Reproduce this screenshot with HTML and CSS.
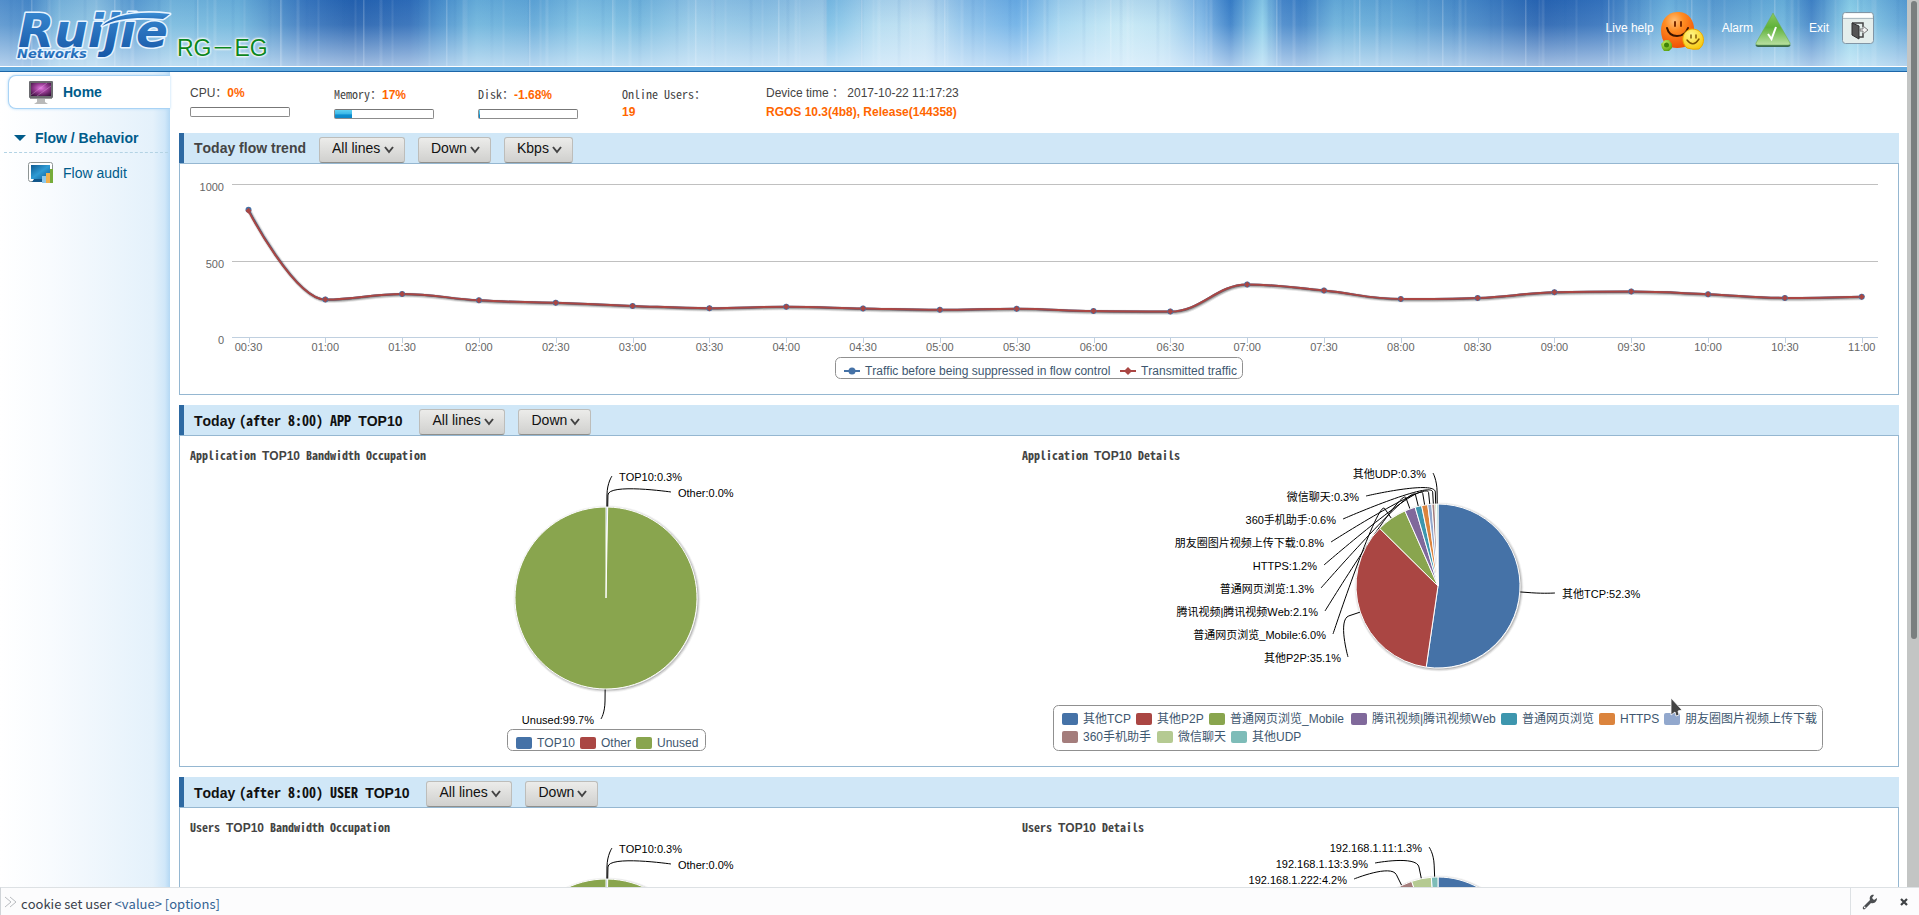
FILE: index.html
```html
<!DOCTYPE html>
<html lang="en">
<head>
<meta charset="utf-8">
<title>RG-EG Home</title>
<link rel="stylesheet" href="styles.css">
</head>
<body>
<div class="viewport">
  <div class="page">
    <header class="banner">
      <div class="brand">
        <svg class="logo" width="160" height="60" viewBox="0 0 160 60" role="img" aria-label="Ruijie Networks">
          <defs>
            <linearGradient id="logoBlue" x1="0" y1="0" x2="0" y2="1"><stop offset="0" stop-color="#3d8fd6"/><stop offset="1" stop-color="#1656a6"/></linearGradient>
          </defs>
          <g class="logo-shape">
            <text class="logo-name" x="4" y="41">Ruijie</text>
            <path d="M88 20 C98 9 124 4 156 8 C153 10 151 12 149 13 C125 11 103 12 88 20 Z"/>
            <text class="logo-sub" x="3" y="52">Networks</text>
          </g>
        </svg>
        <span class="model">RG－EG</span>
      </div>
      <nav class="tools">
        <a class="tool" href="#help">Live help
          <svg width="44" height="40" viewBox="0 0 44 40" aria-hidden="true">
            <defs>
              <radialGradient id="orange" cx=".4" cy=".25" r=".8"><stop offset="0" stop-color="#ffc078"/><stop offset=".35" stop-color="#ff8c22"/><stop offset="1" stop-color="#ee4a00"/></radialGradient>
              <radialGradient id="yellow" cx=".4" cy=".3" r=".8"><stop offset="0" stop-color="#fff78a"/><stop offset="1" stop-color="#f7c400"/></radialGradient>
              <radialGradient id="lime" cx=".4" cy=".3" r=".8"><stop offset="0" stop-color="#c9f060"/><stop offset="1" stop-color="#4d9a08"/></radialGradient>
            </defs>
            <path d="M6 33 C-3 22 0 1 17 0 C34 -1 39 20 29 33 C22 37 12 37 6 33Z" fill="url(#orange)"/>
            <path d="M15 10v4M21 10v4" stroke="#7a2a00" stroke-width="2" stroke-linecap="round"/>
            <path d="M7 16 Q9 24 17 24 Q25 24 28 16" fill="none" stroke="#3b1500" stroke-width="2" stroke-linecap="round"/>
            <path d="M27 36 C20 30 22 18 32 17 C44 17 47 31 39 37 Q33 38 27 36Z" fill="url(#yellow)" stroke="#eda800"/>
            <path d="M31 23v3M36 23v3M27 28 Q33 36 39 27" fill="none" stroke="#7c5200" stroke-width="1.4" stroke-linecap="round"/>
            <path d="M1 32 L5 28 H9 L12 32 V36 L9 39 H4 L2 36Z" fill="url(#lime)"/>
            <circle cx="6.500" cy="33" r="2.500" fill="#3f8408"/>
          </svg>
        </a>
        <a class="tool tool-alarm" href="#alarm">Alarm
          <svg width="36" height="36" viewBox="0 0 36 36" aria-hidden="true">
            <defs><linearGradient id="alarm" x1="0" y1="0" x2="0" y2="1"><stop offset="0" stop-color="#8ac860"/><stop offset=".45" stop-color="#5fb23a"/><stop offset="1" stop-color="#b9dfa2"/></linearGradient></defs>
            <path d="M18 2 L35 32 Q36 35 33 35 H3 Q0 35 1 32Z" fill="#3b6a4e"/>
            <path d="M18 1 L35 31 Q36 33 33 33 H3 Q0 33 1 31Z" fill="url(#alarm)" stroke="#6fae58" stroke-width=".6"/>
            <path d="M13 22 L16.500 27 L21 15" fill="none" stroke="#fff" stroke-width="2"/>
          </svg>
        </a>
        <a class="tool tool-exit" href="#exit">Exit
          <svg width="32" height="32" viewBox="0 0 32 32" aria-hidden="true">
            <rect x=".5" y=".5" width="31" height="31" rx="3" fill="#e4eeec" stroke="#8296a6"/>
            <path d="M1 6.500H31" stroke="#aebdc4"/><path d="M2 3.500H30" stroke="#fff" stroke-width="4"/>
            <path d="M10 11h11v4M21 21v4h-4" fill="none" stroke="#444" stroke-width="1.500"/>
            <path d="M10 11l7 3v13l-7-4Z" fill="#555" stroke="#2e2e2e"/>
            <path d="M18 17h3v-3l5 4-5 4v-3h-3Z" fill="#f5f5f5" stroke="#777"/>
          </svg>
        </a>
      </nav>
    </header>

    <div class="layout">
      <nav class="sidebar">
        <a class="side-link side-active" href="#home">
          <svg width="26" height="26" viewBox="0 0 26 26" aria-hidden="true">
            <defs><radialGradient id="screen" cx=".5" cy=".4" r=".7"><stop offset="0" stop-color="#e27ae0"/><stop offset=".5" stop-color="#93398f"/><stop offset="1" stop-color="#3d1240"/></radialGradient></defs>
            <rect x="1" y="2" width="24" height="17" rx="1" fill="#6b6b6f"/><rect x="3" y="4" width="20" height="13" fill="url(#screen)"/>
            <path d="M3 16 L19 4M9 17L23 7" stroke="#ecb4ea" stroke-width=".7" opacity=".5"/>
            <path d="M2 19h22v1H2z" fill="#999"/><path d="M9 20h8v3l3 2H6l3-2z" fill="#b9b9b9"/>
          </svg>
          <span>Home</span>
        </a>
        <h2 class="side-group">
          <svg width="12" height="6" viewBox="0 0 12 6" aria-hidden="true"><path d="M0 0h12L6 6z" fill="#005b8a"/></svg>
          <span>Flow / Behavior</span>
        </h2>
        <a class="side-link" href="#audit">
          <svg width="26" height="22" viewBox="0 0 26 22" aria-hidden="true">
            <defs><linearGradient id="audit" x1="0" y1="0" x2="1" y2="1"><stop offset="0" stop-color="#0e5a92"/><stop offset=".5" stop-color="#2f9bd4"/><stop offset="1" stop-color="#0f5d96"/></linearGradient></defs>
            <rect x=".5" y=".5" width="24" height="19" rx="2" fill="#fff" stroke="#8d9494"/><rect x="3" y="3" width="19" height="14" fill="url(#audit)"/>
            <path d="M6 17h9v3H4z" fill="#11568a"/>
            <path d="M14 14h4v7h-4z" fill="#8cc9ee"/><path d="M18 11h4v10h-4z" fill="#efb04e"/><path d="M22 7h3v14h-3z" fill="#76ac3a"/>
          </svg>
          <span>Flow audit</span>
        </a>
      </nav>

      <main class="content">
        <section class="stats">
          <div class="stat"><p>CPU：<b>0%</b></p><div class="meter"></div></div>
          <div class="stat stat-mono"><p>Memory：<b>17%</b></p><div class="meter"><i style="width:17%"></i></div></div>
          <div class="stat stat-mono"><p>Disk：<b>-1.68%</b></p><div class="meter"><i style="width:1%"></i></div></div>
          <div class="stat stat-mono"><p>Online Users：</p><p class="second"><b>19</b></p></div>
          <div class="stat stat-wide"><p>Device time ： 2017-10-22 11:17:23</p><p class="second"><b>RGOS 10.3(4b8), Release(144358)</b></p></div>
        </section>

        <section class="panel">
          <div class="panel-head">
            <h2 class="muted">Today flow trend</h2>
            <select class="pick" aria-label="Line"><option>All lines</option><option>Line 1</option></select>
            <select class="pick" aria-label="Direction"><option>Down</option><option>Up</option></select>
            <select class="pick" aria-label="Unit"><option>Kbps</option><option>bps</option></select>
          </div>
          <div class="panel-body"><svg id="trend" class="chart" viewBox="180 164 1718 230"></svg></div>
        </section>

        <section class="panel">
          <div class="panel-head">
            <h2>Today <span class="mono">(after 8:00) APP </span>TOP10</h2>
            <select class="pick" aria-label="Line"><option>All lines</option><option>Line 1</option></select>
            <select class="pick" aria-label="Direction"><option>Down</option><option>Up</option></select>
          </div>
          <div class="panel-body pair">
            <div><h3><span class="mono">Application </span>TOP10<span class="mono"> Bandwidth Occupation</span></h3><svg id="appUse" class="chart" viewBox="190 466 832 300"></svg></div>
            <div><h3><span class="mono">Application </span>TOP10<span class="mono"> Details</span></h3><svg id="appTop" class="chart" viewBox="1022 466 832 300"></svg></div>
          </div>
        </section>

        <section class="panel">
          <div class="panel-head">
            <h2>Today <span class="mono">(after 8:00) USER </span>TOP10</h2>
            <select class="pick" aria-label="Line"><option>All lines</option><option>Line 1</option></select>
            <select class="pick" aria-label="Direction"><option>Down</option><option>Up</option></select>
          </div>
          <div class="panel-body pair">
            <div><h3><span class="mono">Users </span>TOP10<span class="mono"> Bandwidth Occupation</span></h3><svg id="userUse" class="chart" viewBox="190 466 832 300"></svg></div>
            <div><h3><span class="mono">Users </span>TOP10<span class="mono"> Details</span></h3><svg id="userTop" class="chart" viewBox="1022 466 832 300"></svg></div>
          </div>
        </section>
      </main>
    </div>
  </div>
  <div class="scrollbar"><div class="thumb"></div></div>
</div>

<footer class="console">
  <label class="prompt" for="cmd" aria-label="Command"><svg width="14" height="12" viewBox="0 0 14 12" aria-hidden="true"><path d="M1 1l6 5-6 5M6 1l6 5-6 5" fill="none" stroke="#b9bcc0"/></svg></label>
  <input id="cmd" class="cmd" type="text" value="cookie set user">
  <span class="hint">&lt;value&gt; [options]</span>
  <div class="console-tools">
    <button type="button" aria-label="Settings"><svg width="16" height="16" viewBox="0 0 16 16"><path d="M15 4l-3 2-2-2 2-3c-3-1-5 2-4 5L1 13c-1 2 1 3 2 2l6-6c4 1 6-2 6-5z" fill="#4c4f52"/><circle cx="2.700" cy="13.400" r=".8" fill="#fcfcfd"/></svg></button>
    <button type="button" aria-label="Close"><svg width="8" height="8" viewBox="0 0 8 8"><path d="M1 1l6 6M7 1L1 7" stroke="#3f4245" stroke-width="2.200"/></svg></button>
  </div>
</footer>

<svg class="pointer" width="13" height="22" viewBox="0 0 13 22" aria-hidden="true"><path d="M1 1v17l4-3 1 4 3-1-1-4 4-1z" fill="#444" stroke="#fff" stroke-width=".8"/></svg>

<script src="charts.js"></script>
</body>
</html>
```
FILE: styles.css
```css
* { box-sizing: border-box; }

body {
  margin: 0;
  height: 100vh;
  display: flex;
  flex-direction: column;
  overflow: hidden;
  font-family: "Liberation Sans", Arial, "Noto Sans CJK SC", sans-serif;
  font-size: 12px;
  font-kerning: none;
  color: #444;
  background: #fff;
}

h2, h3, p { margin: 0; }
a { text-decoration: none; }

.viewport { flex: 1; min-height: 0; display: flex; }
.page { flex: 1; min-width: 0; overflow: hidden; display: flex; flex-direction: column; }
.scrollbar { width: 12px; padding: 1px 2px 0 4px; background: #c3c5c4; }
.thumb { height: 72%; border-radius: 3px; background: #7a7f7f; }

.mono {
  font-family: "Noto Sans Mono CJK SC", "Noto Sans CJK SC", monospace;
  font-feature-settings: "hwid";
  white-space: pre;
}

/* banner */
.banner {
  flex: none;
  height: 72px;
  display: flex;
  justify-content: space-between;
  border-bottom: 1px solid #1c66a8;
  background:
    linear-gradient(to bottom, transparent 66px, #fff 66px, #fff 67px, #64abe0 67px),
    linear-gradient(to bottom, rgba(20, 80, 170, .1), rgba(255, 255, 255, .08) 35%, rgba(235, 244, 255, .62) 66px),
    repeating-linear-gradient(to right, transparent 0 31px, rgba(255, 255, 255, .2) 31px 32px, transparent 33px 47px, rgba(255, 255, 255, .1) 48px 50px, transparent 51px 83px),
    repeating-linear-gradient(to right, transparent 0 9px, rgba(20, 90, 170, .06) 10px 12px, transparent 13px 21px, rgba(255, 255, 255, .08) 22px 23px, transparent 24px 37px),
    linear-gradient(to right,
      #5a96cf 0, #4a8bc9 1.5%, #7cb8dd 3%, #8fc4e2 5%, #5d9fd3 7%, #78bade 9%, #6fb5dc 12.5%,
      #3a78be 16%, #2461ae 18.5%, #2f6db8 21.5%, #4a90cc 23%, #6db4dc 25%, #62a9d8 28%, #80c2e3 30.5%,
      #74b8de 33.5%, #98cbe8 36.5%, #8cc2e4 40%, #a0cde8 43.3%, #7cbfe5 43.4%, #b2dbf0 46%, #bfe0f2 48.5%,
      #8fc3ea 50.5%, #6db0e6 53.3%, #a5d6f0 55.5%, #c5e8f5 58.8%, #b9e0f2 61%, #7fb8e6 63%, #3a80c8 64.5%,
      #8fd0ea 66.2%, #4a8acb 67.2%, #3f82c6 68.2%, #6ab0da 70%, #5fa5d5 73.5%, #4485c5 77.5%, #2763b0 80.8%,
      #3674bd 84%, #72b7df 87.5%, #5c9fd2 90%, #6db5dc 93.5%, #4284c6 95%, #8fd4ea 97%, #5a9fd3 100%);
}
.brand { display: flex; align-items: flex-start; padding: 6px 0 0 14px; }
.logo-shape { fill: url(#logoBlue); stroke: #e8f4ff; stroke-width: 3; stroke-linejoin: round; paint-order: stroke; }
.logo-name, .logo-sub { font-family: "DejaVu Sans", sans-serif; font-style: italic; font-weight: bold; }
.logo-name { font-size: 47px; }
.logo-sub { font-size: 13px; }
.model {
  margin: 26px 0 0 3px;
  font-size: 23px;
  line-height: 32px;
  color: #0b8620;
  text-shadow: 0 0 2px #fff, 0 0 2px #fff, 0 0 3px #fff, 0 0 3px #fff;
}
.tools { display: flex; align-items: flex-start; padding: 12px 33px 0 0; gap: 18px; }
.tool { display: flex; align-items: flex-start; gap: 6px; color: #fff; line-height: 32px; }
.tool-alarm { gap: 2px; }
.tool-exit { gap: 13px; }

/* sidebar */
.layout { flex: 1; min-height: 0; display: flex; }
.sidebar {
  flex: none;
  width: 170px;
  padding-top: 3px;
  background: linear-gradient(to right, #fff 0, #f8fbfe 30%, #e4f1fb 90%, #d0e7f9 97%, #b4d8f4 100%);
}
.side-link { display: flex; align-items: center; gap: 9px; margin-left: 8px; padding: 0 0 0 20px; height: 34px; font-size: 14px; color: #005b8a; }
.side-active {
  height: 34px;
  font-weight: bold;
  border: 1px solid #a9d3f5;
  border-right: 0;
  border-radius: 8px 0 0 8px;
  padding-left: 19px;
  background: #fff;
  box-shadow: 0 0 3px #b4dbf8;
}
.side-group {
  display: flex;
  align-items: center;
  gap: 9px;
  height: 30px;
  margin: 14px 2px 3px 4px;
  padding-left: 10px;
  font-size: 14px;
  color: #005b8a;
  border-bottom: 1px dashed #b3d3e4;
}

/* content */
.content { flex: 1; min-width: 0; padding: 0 8px 0 9px; }
.stats { display: flex; height: 61px; padding: 12px 0 0 11px; line-height: 18px; }
.stat { width: 144px; }
.stat-wide { width: auto; flex: 1; }
.stat p { height: 18px; white-space: nowrap; }
.stat .second { margin-top: 1px; }
.stat b { color: #f60; }
.stat-mono { padding-top: 1px; }
.stat-mono > p:first-child { font-family: "Noto Sans Mono CJK SC", "Noto Sans CJK SC", monospace; font-feature-settings: "hwid"; }
.stat-mono p b { font-family: "Liberation Sans", Arial, sans-serif; }
.stat-mono .second { margin-top: 0; }
.meter { width: 100px; height: 10px; margin-top: 5px; border: 1px solid #8c8c8c; border-top-color: #777; border-radius: 2px; background: #fff; }
.stat-mono .meter { margin-top: 6px; }
.meter i { display: block; height: 8px; background: linear-gradient(to bottom, #5fd0f0 0, #3db8e8 50%, #0e8fd0 60%, #0e86c8 100%); }

.panel { margin-bottom: 10px; }
.panel-head { display: flex; align-items: flex-start; height: 30px; padding-left: 10px; border-left: 5px solid #2d69a2; background: #d0e7f7; }
.panel-head h2 { margin-right: 4px; font-size: 14px; line-height: 30px; color: #111; white-space: nowrap; }
.panel-head h2.muted { color: #444; margin-right: 0; }
.pick {
  appearance: none;
  height: 26px;
  margin: 4px 0 0 13px;
  padding: 0 23px 5px 12px;
  border: 1px solid #bdbdba;
  border-bottom-color: #8f8f8c;
  border-radius: 3px;
  font-family: inherit;
  font-size: 14px;
  font-kerning: none;
  color: #111;
  background:
    url("data:image/svg+xml,%3Csvg xmlns='http://www.w3.org/2000/svg' width='10' height='8'%3E%3Cpath d='M1 1l4 5 4-5' fill='none' stroke='%23444' stroke-width='2'/%3E%3C/svg%3E") no-repeat right 10px top 8px,
    linear-gradient(to bottom, #ececea, #d0d0ce);
}
.panel-body { border: 1px solid #95b7d1; }
.pair { display: grid; grid-template-columns: 1fr 1fr; padding: 0 44px 0 10px; }
.pair h3 { height: 30px; padding-top: 9px; font-size: 12px; line-height: 20px; color: #444; }
.chart { display: block; width: 100%; height: auto; font-family: "Liberation Sans", Arial, "Noto Sans CJK SC", sans-serif; }

.grid-line { stroke: #c0c0c0; shape-rendering: crispEdges; }
.axis-line { stroke: #c0d0e0; shape-rendering: crispEdges; }
.axis-text { font-size: 11px; fill: #666; }
.data-text { font-size: 11px; fill: #000; }
.legend-text { font-size: 12px; fill: #3e576f; }
.legend-box { fill: #fff; stroke: #909090; }
.connector { fill: none; stroke: #000; }

/* command console */
.console {
  flex: none;
  display: flex;
  align-items: center;
  height: 28px;
  padding-left: 3px;
  border-top: 1px solid #dde1e4;
  border-left: 1px solid #d0d4d8;
  background: #fcfcfd;
  font-family: "Noto Sans CJK SC", sans-serif;
  font-size: 13px;
}
.prompt { display: flex; }
.cmd { field-sizing: content; margin: 0 0 0 3px; padding: 3px 0 0; border: 0; outline: 0; font: inherit; color: #393f4c; background: none; }
.hint { margin-left: 3px; padding-top: 3px; color: #336293; }
.console-tools { display: flex; align-items: center; gap: 22px; height: 100%; margin-left: auto; padding: 0 11px; border-left: 1px solid #dde1e4; }
.console-tools button { display: flex; padding: 0; border: 0; background: none; }

.pointer { position: absolute; left: 1670px; top: 697px; }
```
FILE: charts.js
```js
const NS = 'http://www.w3.org/2000/svg';
const COLORS = ['#4572A7', '#AA4643', '#89A54E', '#80699B', '#3D96AE', '#DB843D', '#92A8CD', '#A47D7C', '#B5CA92', '#7EBCB8'];

function add(parent, tag, attrs, text) {
  const el = document.createElementNS(NS, tag);
  for (const k in attrs) el.setAttribute(k, attrs[k]);
  if (text) el.textContent = text;
  parent.appendChild(el);
  return el;
}

function label(svg, x, y, text, cls, anchor) {
  add(svg, 'text', { x, y, class: cls, 'text-anchor': anchor || 'start' }, text);
}

/* Smooth path through the points without overshooting them. */
function spline(pts) {
  let d = `M${pts[0][0]} ${pts[0][1]}`;
  let prev = pts[0];
  for (let i = 1; i < pts.length; i++) {
    const [x, y] = pts[i];
    const [lx, ly] = pts[i - 1];
    let left = [x, y], right = [x, y];
    if (i < pts.length - 1) {
      const [nx, ny] = pts[i + 1];
      left = [(1.5 * x + lx) / 2.5, (1.5 * y + ly) / 2.5];
      right = [(1.5 * x + nx) / 2.5, (1.5 * y + ny) / 2.5];
      const c = (right[1] - left[1]) * (right[0] - x) / (right[0] - left[0]) + y - right[1];
      left[1] += c; right[1] += c;
      if (left[1] > ly && left[1] > y) { left[1] = Math.max(ly, y); right[1] = 2 * y - left[1]; }
      else if (left[1] < ly && left[1] < y) { left[1] = Math.min(ly, y); right[1] = 2 * y - left[1]; }
      if (right[1] > ny && right[1] > y) { right[1] = Math.max(ny, y); left[1] = 2 * y - right[1]; }
      else if (right[1] < ny && right[1] < y) { right[1] = Math.min(ny, y); left[1] = 2 * y - right[1]; }
    }
    d += `C${prev[0]} ${prev[1]} ${left[0]} ${left[1]} ${x} ${y}`;
    prev = right;
  }
  return d;
}

function diamond(x, y, r) { return `M${x} ${y - r}L${x + r} ${y}L${x} ${y + r}L${x - r} ${y}Z`; }

function drawTrend() {
  const svg = document.getElementById('trend');
  const values = [832, 247, 284, 242, 226, 206, 191, 200, 189, 180, 187, 172, 169, 345, 306, 251, 258, 294, 299, 282, 258, 266];
  const x = i => 248.5 + i * 76.82;
  const y = v => 337.5 - v * 0.1535;
  [[184.5, '1000'], [261.5, '500'], [337.5, '0']].forEach(([gy, t], i) => {
    add(svg, 'path', { d: `M232 ${gy}H1878`, class: i === 2 ? 'axis-line' : 'grid-line' });
    label(svg, 224, Math.floor(gy) + 7, t, 'axis-text', 'end');
  });
  values.forEach((v, i) => {
    const tx = Math.round(x(i)) + 0.5;
    add(svg, 'path', { d: `M${tx} 338v5`, class: 'axis-line' });
    const m = 30 * (i + 1);
    const t = String(Math.floor(m / 60)).padStart(2, '0') + ':' + String(m % 60).padStart(2, '0');
    label(svg, x(i), 351, t, 'axis-text', 'middle');
  });
  const before = values.map((v, i) => [x(i), y(v)]);
  const sent = before.map(([px, py], i) => [px, i ? py : py + 1]);
  [[before, COLORS[0]], [sent, COLORS[1]]].forEach(([pts, color]) => {
    const d = spline(pts);
    [[5, 0.05], [3, 0.1], [1, 0.15]].forEach(([w, o]) =>
      add(svg, 'path', { d, fill: 'none', stroke: '#000', 'stroke-width': w, opacity: o, transform: 'translate(1 1)' }));
    add(svg, 'path', { d, fill: 'none', stroke: color, 'stroke-width': 2 });
  });
  before.forEach(([px, py]) => add(svg, 'circle', { cx: px, cy: py, r: 3, fill: COLORS[0] }));
  sent.forEach(([px, py]) => add(svg, 'path', { d: diamond(px, py, 3), fill: COLORS[1] }));

  add(svg, 'rect', { x: 835.5, y: 357.5, width: 407, height: 21, rx: 5, class: 'legend-box' });
  add(svg, 'path', { d: 'M844 371h16', stroke: COLORS[0], 'stroke-width': 2 });
  add(svg, 'circle', { cx: 852, cy: 371, r: 3.5, fill: COLORS[0] });
  label(svg, 865, 375, 'Traffic before being suppressed in flow control', 'legend-text');
  add(svg, 'path', { d: 'M1120 371h16', stroke: COLORS[1], 'stroke-width': 2 });
  add(svg, 'path', { d: diamond(1128, 371, 4), fill: COLORS[1] });
  label(svg, 1141, 375, 'Transmitted traffic', 'legend-text');
}

/* Each slice: [name, percent, label x, label baseline, anchor]. */
function drawPie(id, cx, cy, r, slices) {
  const svg = document.getElementById(id);
  const total = slices.reduce((s, d) => s + d[1], 0);
  let a = -Math.PI / 2;
  const arcs = slices.map((s, i) => {
    const a0 = a, a1 = a + s[1] / total * Math.PI * 2;
    a = a1;
    return { s, a0, a1, mid: (a0 + a1) / 2, color: COLORS[i] };
  });
  const at = (ang, rad) => [cx + Math.cos(ang) * rad, cy + Math.sin(ang) * rad];
  arcs.forEach(({ s, mid }) => {
    if (s[2] === undefined) return;
    const x = s[2] + (s[4] === 'end' ? 7 : -7), y = s[3] - 5;
    add(svg, 'path', { d: `M${x} ${y}C${x} ${y} ${at(mid, r + 24)} ${at(mid, r + 12)}L${at(mid, r)}`, class: 'connector' });
    label(svg, s[2], s[3], `${s[0]}:${s[1].toFixed(1)}%`, 'data-text', s[4]);
  });
  [[5, 0.05], [3, 0.1], [1, 0.15]].forEach(([w, o]) =>
    add(svg, 'circle', { cx: cx + 1, cy: cy + 1, r, fill: 'none', stroke: '#000', 'stroke-width': w, opacity: o }));
  arcs.forEach(({ a0, a1, color }) => {
    const big = a1 - a0 > Math.PI ? 1 : 0;
    add(svg, 'path', { d: `M${cx} ${cy}L${at(a0, r)}A${r} ${r} 0 ${big} 1 ${at(a1, r)}Z`, fill: color, stroke: '#fff', 'stroke-linejoin': 'round' });
  });
}

function drawLegend(id, box, rows) {
  const svg = document.getElementById(id);
  add(svg, 'rect', { x: box[0], y: box[1], width: box[2], height: box[3], rx: 5, class: 'legend-box' });
  rows.forEach(([i, x, y, name]) => {
    add(svg, 'rect', { x, y: y - 10, width: 16, height: 12, rx: 2, fill: COLORS[i] });
    label(svg, x + 21, y, name, 'legend-text');
  });
}

drawTrend();

['appUse', 'userUse'].forEach(id => {
  drawPie(id, 606, 598, 91, [
    ['TOP10', 0.3, 619, 481, 'start'],
    ['Other', 0.0, 678, 497, 'start'],
    ['Unused', 99.7, 594, 724, 'end']
  ]);
  drawLegend(id, [507.5, 729.5, 198, 21], [[0, 516, 747, 'TOP10'], [1, 580, 747, 'Other'], [2, 636, 747, 'Unused']]);
});

drawPie('appTop', 1438, 586, 82, [
  ['其他TCP', 52.3, 1562, 598, 'start'],
  ['其他P2P', 35.1, 1341, 662, 'end'],
  ['普通网页浏览_Mobile', 6.0, 1326, 639, 'end'],
  ['腾讯视频|腾讯视频Web', 2.1, 1318, 616, 'end'],
  ['普通网页浏览', 1.3, 1314, 593, 'end'],
  ['HTTPS', 1.2, 1317, 570, 'end'],
  ['朋友圈图片视频上传下载', 0.8, 1324, 547, 'end'],
  ['360手机助手', 0.6, 1336, 524, 'end'],
  ['微信聊天', 0.3, 1359, 501, 'end'],
  ['其他UDP', 0.3, 1426, 478, 'end']
]);
drawLegend('appTop', [1053.5, 705.5, 769, 45], [
  [0, 1062, 723, '其他TCP'], [1, 1136, 723, '其他P2P'], [2, 1209, 723, '普通网页浏览_Mobile'],
  [3, 1351, 723, '腾讯视频|腾讯视频Web'], [4, 1501, 723, '普通网页浏览'], [5, 1599, 723, 'HTTPS'],
  [6, 1664, 723, '朋友圈图片视频上传下载'], [7, 1062, 741, '360手机助手'], [8, 1157, 741, '微信聊天'], [9, 1231, 741, '其他UDP']
]);

drawPie('userTop', 1438, 587, 82, [
  ['192.168.1.20', 33.0], ['192.168.1.31', 18.0], ['192.168.1.7', 12.4], ['192.168.1.45', 8.6],
  ['192.168.1.52', 7.0], ['192.168.1.60', 6.2], ['192.168.1.77', 5.4],
  ['192.168.1.222', 4.2, 1347, 512, 'end'],
  ['192.168.1.13', 3.9, 1368, 496, 'end'],
  ['192.168.1.11', 1.3, 1422, 480, 'end']
]);
```
